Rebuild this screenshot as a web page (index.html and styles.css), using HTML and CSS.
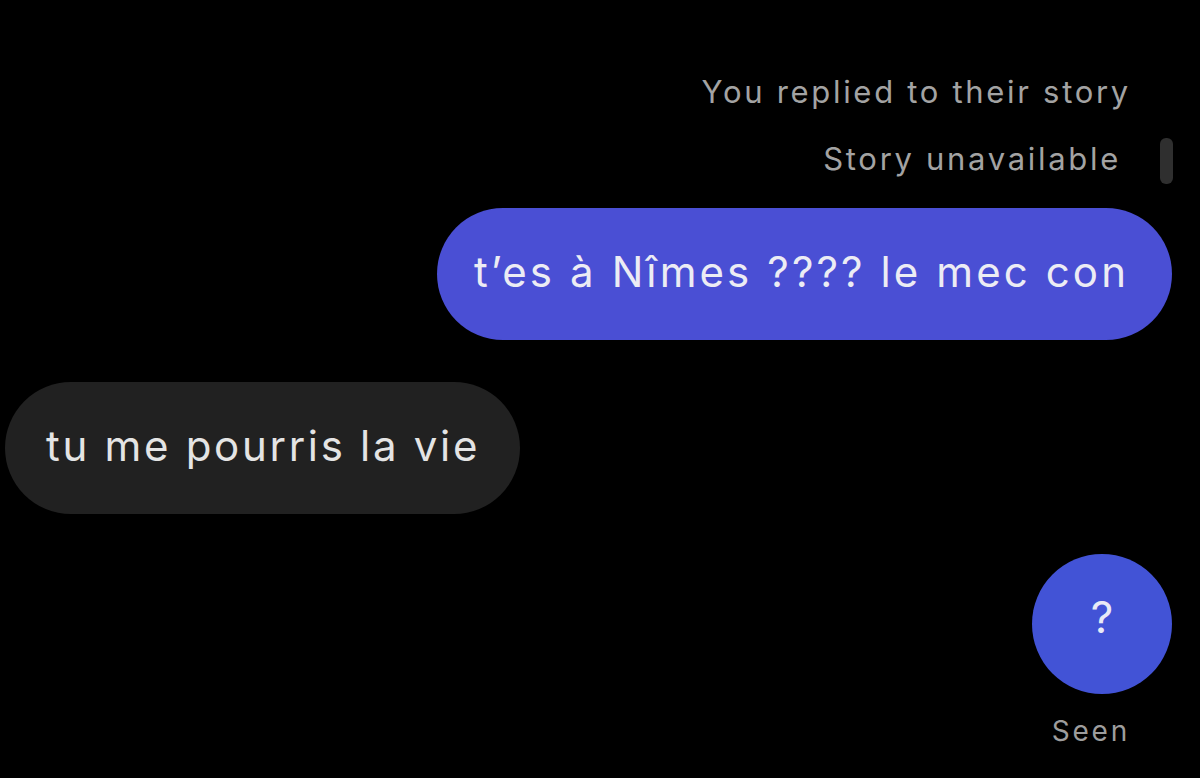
FILE: index.html
```html
<!DOCTYPE html>
<html lang="fr">
<head>
<meta charset="utf-8">
<link rel="stylesheet" href="styles.css">
<title>Messages</title>
</head>
<body>
<div class="chat">
  <div class="meta-block">
    <div class="meta replied">You replied to their story</div>
    <div class="meta-row">
      <div class="meta unavailable">Story unavailable</div>
      <div class="story-bar"></div>
    </div>
  </div>
  <div class="row out">
    <div class="bubble blue">t’es à Nîmes ???? le mec con</div>
  </div>
  <div class="row in">
    <div class="bubble grey">tu me pourris la vie</div>
  </div>
  <div class="row out">
    <div class="circle">?</div>
  </div>
  <div class="row out">
    <div class="seen">Seen</div>
  </div>
</div>
</body>
</html>
```
FILE: styles.css
```css
html, body {
  margin: 0;
  padding: 0;
  background: #000;
  width: 1200px;
  height: 778px;
  overflow: hidden;
}
.chat {
  font-family: Inter, "Liberation Sans", Arial, sans-serif;
  display: flex;
  flex-direction: column;
  padding-top: 72px;
}
.meta-block {
  display: flex;
  flex-direction: column;
  align-items: flex-end;
  padding-right: 27px;
}
.meta {
  color: #a3a3a3;
  font-size: 31px;
  line-height: 40px;
  letter-spacing: 2.7px;
}
.replied {
  margin-right: 42px;
}
.meta-row {
  display: flex;
  align-items: center;
  margin-top: 22px;
}
.unavailable {
  margin-right: 39px;
}
.story-bar {
  width: 13px;
  height: 46px;
  border-radius: 6px;
  background: #2f2f2f;
  margin-top: 4px;
}
.row {
  display: flex;
}
.row.out {
  justify-content: flex-end;
  padding-right: 28px;
}
.row.in {
  justify-content: flex-start;
  padding-left: 5px;
}
.bubble {
  height: 132px;
  border-radius: 66px;
  display: flex;
  align-items: center;
  font-size: 42px;
  box-sizing: border-box;
  padding-bottom: 6px;
}
.bubble.blue {
  margin-top: 24px;
  width: 735px;
  background: #4a4fd4;
  color: #ececf4;
  padding-left: 37px;
  letter-spacing: 3.1px;
}
.bubble.grey {
  margin-top: 42px;
  width: 515px;
  background: #212121;
  color: #e4e4e4;
  padding-left: 41px;
  letter-spacing: 2.7px;
}
.circle {
  margin-top: 40px;
  width: 140px;
  height: 140px;
  border-radius: 50%;
  background: #4253d6;
  color: #e8eaf6;
  font-size: 44px;
  display: flex;
  align-items: center;
  justify-content: center;
  box-sizing: border-box;
  padding-bottom: 14px;
}
.seen {
  margin-top: 18px;
  margin-right: 42px;
  color: #9d9d9d;
  font-size: 28px;
  line-height: 38px;
  letter-spacing: 2.8px;
}
```
